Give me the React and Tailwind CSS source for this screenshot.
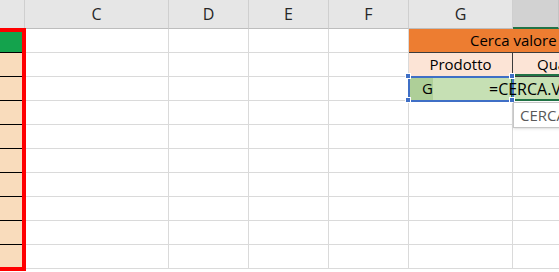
import React from 'react'

const COLS = ['B', 'C', 'D', 'E', 'F', 'G', 'H']
const ROWS = 10

const font = { fontFamily: '"Open Sans", "Noto Sans", sans-serif' }

function HeadCell({ label, active, hidden }) {
  return (
    <div
      className={`h-[29px] flex items-center justify-center border-b border-r text-[16px] text-[#262626] ${
        active ? 'bg-[#d2d2d2] border-b-[#217346] border-b-2 border-r-[#c4c4c4]' : 'bg-[#e6e6e6] border-b-[#bdbdbd] border-r-[#cfcfcf]'
      }`}
    >
      {hidden ? '' : label}
    </div>
  )
}

function Cell({ bg = 'bg-white', line = 'border-[#dadada]', className = '', children }) {
  return <div className={`h-6 border-b border-r ${line} ${bg} ${className}`}>{children}</div>
}

const Peach = ({ first }) => (
  <Cell bg={first ? 'bg-[#14a34d]' : 'bg-[#f9dcbc]'} line="border-b-black border-r-transparent" />
)

function Row({ i }) {
  const blanks = (
    <>
      <Cell />
      <Cell />
      <Cell />
      <Cell />
    </>
  )
  if (i === 0) {
    return (
      <>
        <Peach first />
        {blanks}
        <div className="col-span-2 h-6 bg-[#ed7d31] border-b border-[#3b3b3b] flex items-center pl-[61px] whitespace-nowrap overflow-hidden text-[15px] text-black">
          Cerca valore
        </div>
      </>
    )
  }
  if (i === 1) {
    return (
      <>
        <Peach />
        {blanks}
        <Cell bg="bg-[#fce4d6]" line="border-[#3b3b3b]" className="flex items-center justify-center text-[15px] text-black">
          Prodotto
        </Cell>
        <Cell bg="bg-[#fce4d6]" line="border-b-[#3b3b3b] border-r-0" className="flex items-center pl-[24px] whitespace-nowrap overflow-hidden text-[15px] text-black">
          Quantità
        </Cell>
      </>
    )
  }
  if (i === 2) {
    return (
      <>
        <Peach />
        {blanks}
        <Cell bg="bg-[#c6e0b4]" className="flex items-stretch">
          <div className="w-[24px] bg-[#aecf98] flex items-center pl-[13px] text-[15px] text-black">G</div>
        </Cell>
        <Cell bg="bg-[#c6e0b4]" line="border-b-[#dadada] border-r-0" />
      </>
    )
  }
  return (
    <>
      <Peach />
      {blanks}
      <Cell />
      <Cell line="border-b-[#dadada] border-r-0" />
    </>
  )
}

function Handle({ className }) {
  return <div className={`absolute w-[6px] h-[6px] bg-[#3f6fc6] border border-white ${className}`} />
}

export default function App() {
  return (
    <div className="relative w-[559px] h-[272px] overflow-hidden bg-white" style={font}>
      <div className="grid grid-cols-[25px_144px_80px_80px_80px_104px_1fr]">
        {COLS.map((c, k) => (
          <HeadCell key={c} label={c} hidden={k === 0 || c === 'H'} active={c === 'H'} />
        ))}
        {[...Array(ROWS)].map((_, i) => (
          <Row key={i} i={i} />
        ))}
      </div>

      {/* red outline around column B */}
      <div className="absolute left-[-20px] top-[28px] w-[46px] h-[243px] border-4 border-[#ff0000]" />

      {/* active cell H3 */}
      <div className="absolute left-[511px] top-[74px] w-[60px] h-[27px] border-2 border-[#217346]" />

      {/* reference G3 */}
      <div className="absolute left-[408px] top-[76px] w-[106px] h-[26px] border-2 border-[#3f6fc6]" />
      <Handle className="left-[405px] top-[73px]" />
      <Handle className="left-[509px] top-[73px]" />
      <Handle className="left-[405px] top-[97px]" />
      <Handle className="left-[509px] top-[97px]" />

      {/* edit text */}
      <div className="absolute left-[489px] top-[78px] h-[22px] flex items-center whitespace-nowrap text-[16px] text-black">
        =CERCA.VERT(G
      </div>

      {/* function tooltip */}
      <div className="absolute left-[513px] top-[102px] h-[26px] pl-[6px] pr-2 flex items-center whitespace-nowrap bg-white border border-[#c6c6c6] shadow-sm text-[15px] text-[#595959]">
        CERCA.VERT(valore; matrice_tabella; indice; [intervallo])
      </div>
    </div>
  )
}
